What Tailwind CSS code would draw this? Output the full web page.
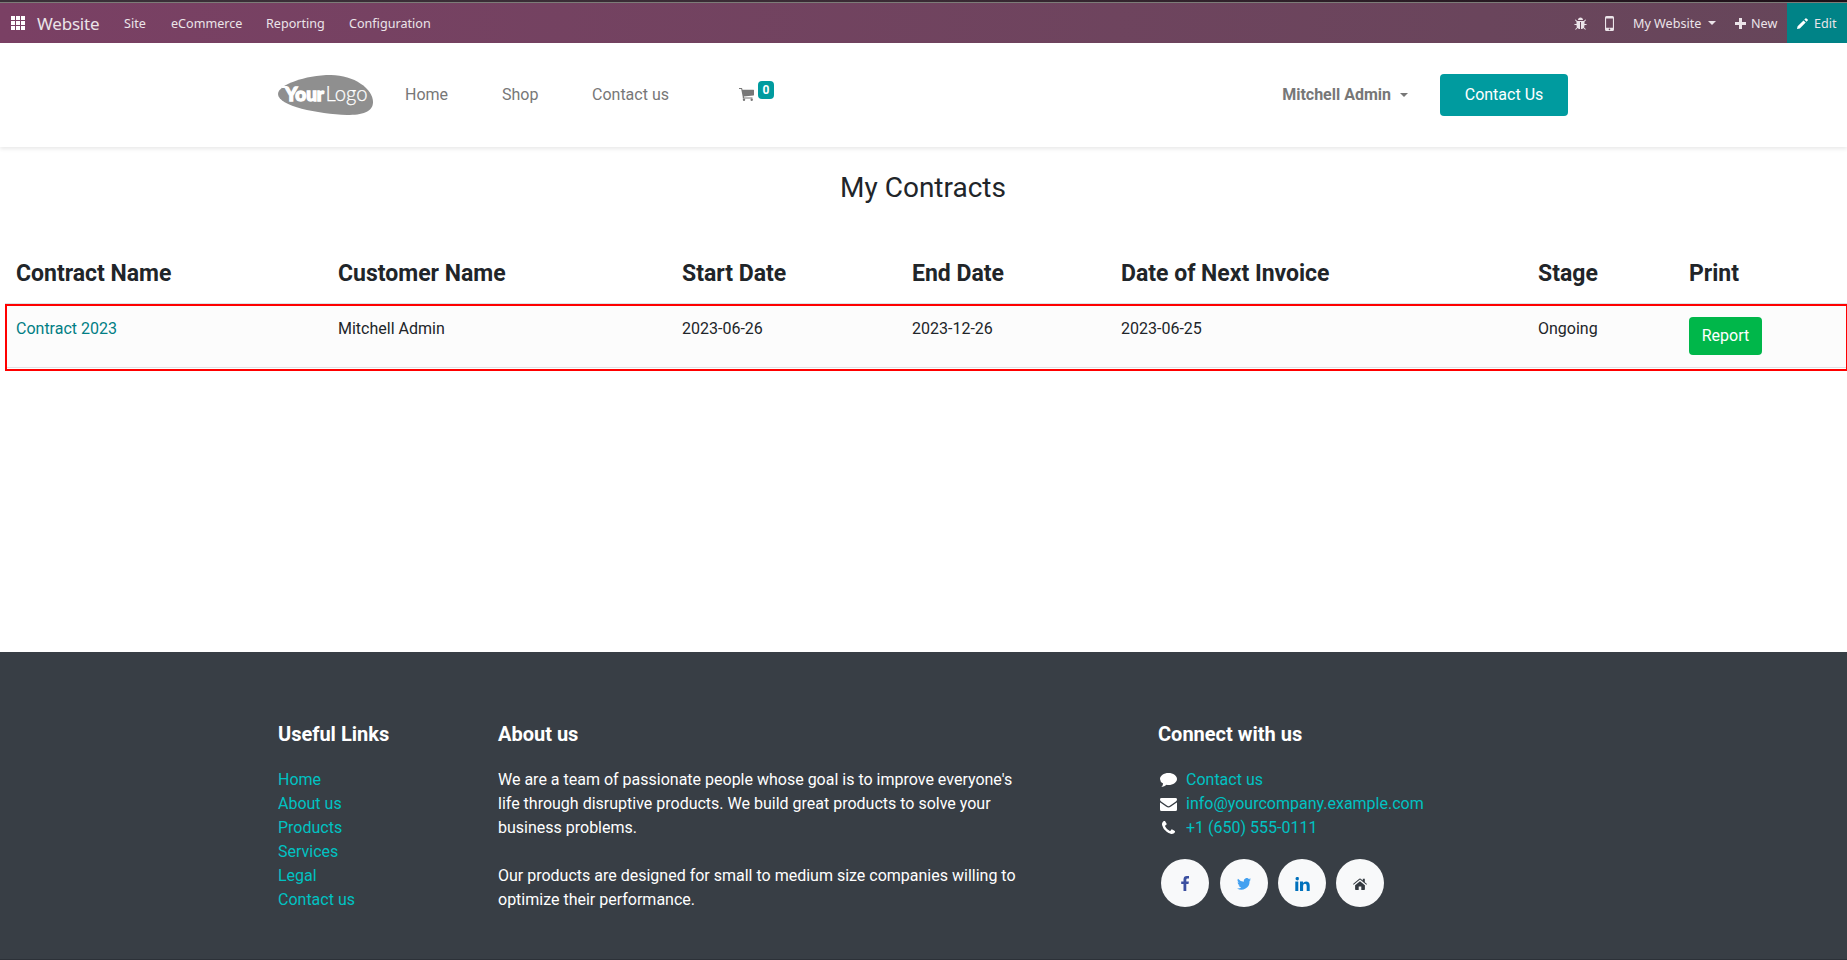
<!DOCTYPE html>
<html lang="en">
<head>
<meta charset="utf-8">
<title>My Contracts | My Website</title>
<script src="https://cdn.jsdelivr.net/npm/@tailwindcss/browser@4"></script>
</head>
<body class="flex h-[960px] w-[1847px] flex-col overflow-hidden bg-white font-[Roboto,sans-serif] text-base leading-6 text-[#212529]">

<div class="h-[3px] shrink-0 border-b border-[#7c7c78] bg-linear-to-r from-[#3a3038] via-[#3a2a34] to-[#1d1018]"></div>

<nav class="flex h-10 shrink-0 items-center bg-linear-to-r from-[#7a4064] to-[#66465a] pl-[11px] font-['Noto_Sans',sans-serif] text-[13px] text-[#ebe4e9]">
  <svg class="h-3.5 w-3.5" viewBox="0 0 14 14" fill="#fff"><path d="M0 0h4v4H0zM5 0h4v4H5zM10 0h4v4h-4zM0 5h4v4H0zM5 5h4v4H5zM10 5h4v4h-4zM0 10h4v4H0zM5 10h4v4H5zM10 10h4v4h-4z"/></svg>
  <span class="ml-3 w-[86px] pt-px text-[17px] tracking-[-0.2px]">Website</span>
  <div class="flex pt-px pl-px text-[12.6px]">
    <span class="w-[47px]">Site</span>
    <span class="w-[95px]">eCommerce</span>
    <span class="w-[83px]">Reporting</span>
    <span>Configuration</span>
  </div>
  <div class="ml-auto flex h-full items-center text-[12.6px]">
    <svg class="h-[13px] w-[13px]" viewBox="0 0 1664 1664" fill="#ebe4e9"><path d="M1632 960q0 26-19 45t-45 19h-224q0 171-67 290l208 209q19 19 19 45t-19 45q-18 19-45 19t-45-19l-198-197q-5 5-15 13t-42 28.500-65 36.500-82 29-97 13V640H768v896q-51 0-101.500-13.500t-87-33-66-39-43.500-32.500l-15-14-183 207q-20 21-48 21-24 0-43-16-19-18-20.500-44.500t15.500-46.500l202-227q-58-114-58-274H96q-26 0-45-19t-19-45 19-45 45-19h224V602L147 429q-19-19-19-45t19-45 45-19 45 19l173 173h844l173-173q19-19 45-19t45 19 19 45-19 45l-173 173v294h224q26 0 45 19t19 45zM1152 384H512q0-133 93.500-226.500T832 64t226.500 93.500T1152 384z"/></svg>
    <svg class="ml-[18px] h-[15px] w-[9px]" viewBox="0 0 9 15"><path fill="#ebe4e9" fill-rule="evenodd" d="M1.500 0h6Q9 0 9 1.500v12Q9 15 7.500 15h-6Q0 15 0 13.500v-12Q0 0 1.500 0zM1.100 2.500v9.300h6.800V2.500zM4.500 12.600a.8.800 0 100 1.600.8.800 0 000-1.600z"/></svg>
    <span class="ml-[19px] w-[75px] pt-px">My Website</span>
    <svg class="h-1 w-2" viewBox="0 0 8 4"><path fill="#ebe4e9" d="M0 0h8L4 4z"/></svg>
    <svg class="ml-[19px] h-[11px] w-[11px]" viewBox="0 0 11 11"><path fill="#ebe4e9" d="M4 0h3v4h4v3H7v4H4V7H0V4h4z"/></svg>
    <span class="ml-[5px] w-[36px] pt-px">New</span>
    <div class="flex h-full w-[60px] items-center bg-[#008387] pl-[10px]">
      <svg class="h-[11px] w-[11px]" viewBox="0 0 11 11" fill="#fff"><path d="M7.300 1.600l2.200 2.200 1.200-1.200q.5-.5 0-1L9.500.4q-.6-.5-1.100 0zM6.500 2.400L.6 8.300 0 11l2.800-.6 5.900-5.900z"/></svg>
      <span class="ml-[6px] pt-px">Edit</span>
    </div>
  </div>
</nav>

<header class="h-[104px] shrink-0 shadow-[0_2px_4px_rgba(0,0,0,0.09)]">
  <div class="flex h-[103px] items-center pl-[278px] text-[#777]">
    <svg class="h-10 w-[95px]" viewBox="0 0 95 40">
      <path fill="#8f8f8f" d="M0 19C0 10 27 0 53 0C76 0 95 14 95 27C95 37 84 40 69 40C40 39 0 31 0 19z"/>
      <text x="7" y="25.500" fill="#fff" stroke="#fff" stroke-width="1.300" font-family="Lato" font-weight="900" font-size="19.500" textLength="39" lengthAdjust="spacingAndGlyphs">Your</text>
      <path fill="#fff" d="M4 11h5v2H4z"/>
      <text x="47.500" y="25.500" fill="#fff" stroke="#fff" stroke-width=".25" font-family="Lato" font-weight="300" font-size="21" textLength="42" lengthAdjust="spacingAndGlyphs">Logo</text>
    </svg>
    <span class="ml-8 w-[97px]">Home</span>
    <span class="w-[90px]">Shop</span>
    <span class="w-[147px]">Contact us</span>
    <svg class="h-[13px] w-[15px]" viewBox="0 0 15 13" fill="#777"><path d="M0 0h2.700q.5 0 .6.900L3.500 1.700H14.500q.5 0 .5.500v4.600q0 .5-.5.600L4.900 8.500l.2 1H13.500v1.100H4.200q-.5 0-.5-.5l.1-.8L2.200 1.100H0z"/><circle cx="5" cy="11.800" r="1.200"/><circle cx="12.700" cy="11.800" r="1.200"/></svg>
    <span class="ml-1 mb-2.5 flex h-[18px] w-4 items-center justify-center rounded bg-[#009b9f] text-xs font-bold text-white">0</span>
    <span class="ml-auto font-bold">Mitchell Admin</span>
    <svg class="ml-[9px] h-1 w-2" viewBox="0 0 8 4"><path fill="#777" d="M0 0h8L4 4z"/></svg>
    <a class="mr-[279px] ml-8 flex h-[42px] w-32 items-center justify-center rounded bg-[#009b9f] text-white">Contact Us</a>
  </div>
</header>

<main class="h-[505px] shrink-0 pl-[5px]">
  <h1 class="pt-6 pr-[6px] text-center text-[28px] leading-[34px]">My Contracts</h1>
  <div class="mt-[54px] grid h-[44px] grid-cols-[322px_344px_230px_209px_417px_151px_1fr] pl-[11px] text-[23px] leading-[29px] font-bold">
    <span>Contract Name</span><span>Customer Name</span><span>Start Date</span><span>End Date</span><span>Date of Next Invoice</span><span>Stage</span><span>Print</span>
  </div>
  <div class="h-px bg-[#dee2e6]"></div>
  <div class="h-[67px] border-2 border-r border-[#f00] pb-px">
    <div class="grid h-[62px] grid-cols-[322px_344px_230px_209px_417px_151px_1fr] border-b border-[#dee2e6] bg-[#fcfcfc] pt-[11px] pl-[9px]">
      <span class="text-[#017e84]">Contract 2023</span><span>Mitchell Admin</span><span>2023-06-26</span><span>2023-12-26</span><span>2023-06-25</span><span>Ongoing</span>
      <a class="flex h-[38px] w-[73px] items-center justify-center rounded bg-[#00b74a] text-white">Report</a>
    </div>
  </div>
</main>

<footer class="h-[308px] shrink-0 border-b border-[#2c3138] bg-[#383e45] pt-[70px] pl-[278px] text-white">
  <div class="grid grid-cols-[220px_660px_1fr]">
    <section>
      <h5 class="mb-[22px] text-xl leading-6 font-bold">Useful Links</h5>
      <ul class="text-[#00c2c2]"><li>Home</li><li>About us</li><li>Products</li><li>Services</li><li>Legal</li><li>Contact us</li></ul>
    </section>
    <section>
      <h5 class="mb-[22px] text-xl leading-6 font-bold">About us</h5>
      <p class="w-[520px]">We are a team of passionate people whose goal is to improve everyone's life through disruptive products. We build great products to solve your business problems.<br><br>Our products are designed for small to medium size companies willing to optimize their performance.</p>
    </section>
    <section>
      <h5 class="mb-[22px] text-xl leading-6 font-bold">Connect with us</h5>
      <ul class="text-[#00c2c2]">
        <li class="flex items-center pl-0.5"><svg class="mr-[9px] h-3.5 w-[17px]" viewBox="0 0 17 14" fill="#fff"><path d="M8.500 0C13.200 0 17 2.700 17 6s-3.800 6-8.500 6q-1 0-1.900-.2Q4.500 13.700 1.400 14q1.500-1.300 1.700-3.500Q0 8.800 0 6C0 2.700 3.800 0 8.500 0z"/></svg>Contact us</li>
        <li class="flex items-center pl-0.5"><svg class="mr-[9px] h-[13px] w-[17px]" viewBox="0 0 17 13" fill="#fff"><path d="M1.500 0h14Q17 0 17 1.400q0 1.300-1.500 2.300L10.500 7.200Q9.200 8.200 8.500 8.200T6.500 7.200L1.500 3.700Q0 2.600 0 1.400 0 0 1.500 0zM0 4.200q.4.400 1 .8l5 3.500q1.500 1.100 2.500 1.100t2.500-1.100l5-3.500q.6-.4 1-.8v7.300q0 1.500-1.500 1.500h-14Q0 13 0 11.500z"/></svg>info@yourcompany.example.com</li>
        <li class="flex items-center pl-1"><svg class="mr-[11px] mb-0.5 h-[13px] w-[13px]" viewBox="0 0 1408 1408" fill="#fff"><path d="M1408 1112q0 27-10 70.500t-21 68.500q-21 50-122 106-94 51-186 51-27 0-53-3.500t-57.500-12.500-47-14.500T856 1357.500 807 1339q-98-35-175-83-127-79-264-216T152 776q-48-77-83-175-3-9-18.500-49T30 496.500 15.500 449.500 3 392 0 339q0-92 51-186Q107 52 157 31q25-11 68.500-21T296 0q14 0 21 3 18 6 53 76 11 19 30 54t35 63.500 31 53.500q3 4 17.500 25t21.500 35.500 7 28.500q0 20-28.500 50T421.500 444t-61.500 53.500-28 48.500q0 9 5 22.500t8.500 20.500 14 24 11.500 19q76 137 174 235t235 174q2 1 19 11.500t24 14 20.500 8.500 22.500 5q18 0 48-28t53.500-61 55.500-61.500 50-28.500q14 0 28.500 7t35.500 21.500 25 17.500q25 15 53.500 31t63.500 35 54 30q70 35 76 53 3 7 3 21z"/></svg>+1 (650) 555-0111</li>
      </ul>
      <div class="mt-[19px] flex gap-2.5 pl-[3px]">
        <a class="mr-px flex size-12 items-center justify-center rounded-full bg-[#f8f9fa]"><svg class="h-[15px] w-2" viewBox="0 0 8 15"><path fill="#3b4fa0" d="M8 .1v2.400H6.600q-1.300 0-1.300 1.200v1.700h2.600l-.4 2.600H5.300V15H2.500V8H.2V5.400h2.300V3.400Q2.500 0 5.900 0 7.400 0 8 .1z"/></svg></a>
        <a class="flex size-12 items-center justify-center rounded-full bg-[#f8f9fa]"><svg class="mt-px mr-px h-[12px] w-3.5" viewBox="0 0 24 20" preserveAspectRatio="none"><path fill="#42a0f0" d="M24 2.400q-1.300.6-2.800.8 1.600-1 2.200-2.700-1.500.9-3.200 1.200A4.900 4.900 0 0011.800 6.200 14 14 0 011.700 1.100a4.900 4.900 0 001.500 6.500q-1.200 0-2.200-.6a4.900 4.900 0 003.900 4.900q-1.100.3-2.200.1a4.900 4.900 0 004.600 3.400A9.900 9.900 0 010 17.400a14 14 0 0021.500-12.500Q23 3.900 24 2.400z"/></svg></a>
        <a class="flex size-12 items-center justify-center rounded-full bg-[#f8f9fa]"><svg class="mt-0.5 h-[14px] w-[15px]" viewBox="0 0 15 14" fill="#0071bc"><path d="M.3 4.600h3V14h-3zM1.800 0a1.700 1.700 0 110 3.300A1.700 1.700 0 011.800 0zM5 4.600h3v1.300q1-1.500 3-1.500 3.700 0 3.700 4.200V14h-3V9q0-2.200-1.700-2.200-1.900 0-1.900 2.300V14H5z"/></svg></a>
        <a class="flex size-12 items-center justify-center rounded-full bg-[#f8f9fa]"><svg class="mt-px h-3 w-3.5" viewBox="0 0 14 12" fill="#343a40"><path d="M7 3.200L11.900 7.300v4q0 .7-.7.700H8.300V8.600H5.700V12H2.800q-.7 0-.7-.7v-4zM6.300.7q.7-.5 1.400 0L9.800 2.500V.8h2v3.400L14 6l-.6.8L7 1.600.6 6.800 0 6z"/></svg></a>
      </div>
    </section>
  </div>
</footer>
</body>
</html>
